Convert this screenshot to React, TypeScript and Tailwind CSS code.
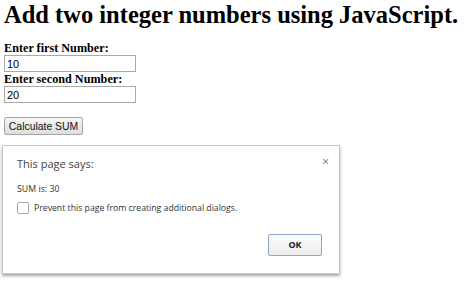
export default function App() {
  return (
    <div className="h-[282px] w-[474px] overflow-hidden bg-white">
      <div className="px-1 font-['Liberation_Serif',serif] text-black">
        <h1 className="whitespace-nowrap text-[24.5px] leading-[30px] font-bold">Add two integer numbers using JavaScript.</h1>
        <div className="mt-[11px] whitespace-nowrap text-[12.2px] leading-[14px] font-bold">Enter first Number:</div>
        <input
          className="block h-[17px] w-[132px] border border-[#a9a9a9] px-[2px] font-['Liberation_Sans',sans-serif] text-[11px] leading-[15px] text-black"
          defaultValue="10"
        />
        <div className="mt-[1px] whitespace-nowrap text-[12.2px] leading-[13px] font-bold">Enter second Number:</div>
        <input
          className="block h-[17px] w-[132px] border border-[#a9a9a9] px-[2px] font-['Liberation_Sans',sans-serif] text-[11px] leading-[15px] text-black"
          defaultValue="20"
        />
        <button
          type="button"
          className="mt-[14px] block h-[18px] w-[79px] whitespace-nowrap rounded-[2px] border border-[#a6a6a6] bg-gradient-to-b from-[#f6f6f6] to-[#dedede] font-['Liberation_Sans',sans-serif] text-[10.4px] leading-[15px] text-[#111]"
        >
          Calculate SUM
        </button>
      </div>

      <div className="ml-[2px] mt-[10px] h-[129px] w-[338px] border border-[#c8c8c8] bg-white shadow-[0_2px_3px_rgba(0,0,0,0.35)] font-['Open_Sans',sans-serif] text-[#333]">
        <div className="flex items-start justify-between pl-[14px] pr-[10px] pt-[9px]">
          <div className="text-[11px] leading-[18px] text-[#444]">This page says:</div>
          <div className="text-[12px] leading-[14px] text-[#777]">×</div>
        </div>
        <div className="mt-[9px] pl-[14px] text-[8.8px] leading-[14px] text-[#333]">SUM is: 30</div>
        <div className="mt-[5px] flex items-center gap-[5px] pl-[14px]">
          <span className="h-[12px] w-[12px] rounded-[2px] border border-[#a9a9a9] bg-white" />
          <span className="text-[8.7px] leading-[14px] text-[#333]">Prevent this page from creating additional dialogs.</span>
        </div>
        <div className="mt-[19px] flex justify-end pr-[17px]">
          <button
            type="button"
            className="h-[22px] w-[54px] rounded-[2px] border border-[#8fa7c6] bg-gradient-to-b from-[#fbfbfb] to-[#ececec] text-[9px] leading-[14px] font-bold text-[#222]"
          >
            OK
          </button>
        </div>
      </div>
    </div>
  );
}
